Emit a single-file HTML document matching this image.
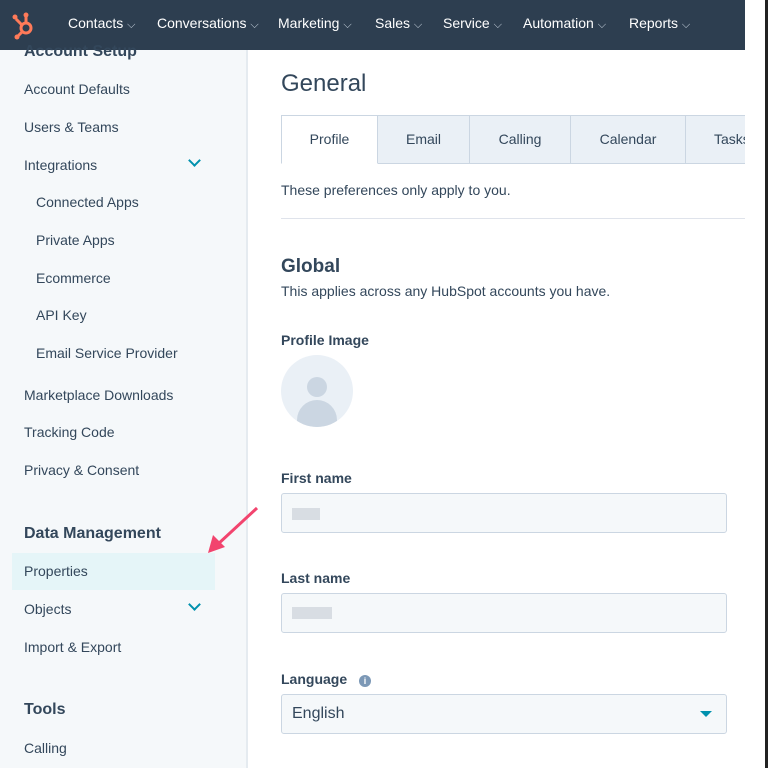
<!DOCTYPE html><html><head><style>
*{margin:0;padding:0;box-sizing:border-box}
body{width:768px;height:782px;background:#fff;font-family:"Liberation Sans",sans-serif;position:relative;overflow:hidden;color:#33475b}
.nav{position:absolute;left:0;top:0;width:745px;height:50px;background:#2d3e50}
.nav span{position:absolute;top:15px;color:#fff;font-size:14px}
.nav i{font-style:normal;font-size:11px;color:#cbd6e2}
.side{position:absolute;left:0;top:50px;width:248px;height:718px;background:#f5f8fa;border-right:2px solid #e5ebf0}
.side div{position:absolute;font-size:14px;color:#33475b}
.side .h{font-size:16px;font-weight:bold}
.abs{position:absolute}
.clip{position:absolute;left:0;top:0;width:745px;height:782px;overflow:hidden}
.tab{position:absolute;top:115px;height:49px;border:1px solid #cbd6e2;background:#eaf0f6;font-size:14px;text-align:center;line-height:47px}
.lbl{position:absolute;left:281px;font-size:14px;font-weight:bold;color:#33475b}
.inp{position:absolute;left:281px;width:446px;height:40px;background:#f5f8fa;border:1px solid #cbd6e2;border-radius:3px}
.chev{position:absolute;width:9px;height:9px;border-right:2px solid #0091ae;border-bottom:2px solid #0091ae;transform:rotate(45deg)}
</style></head><body>
<div class="nav">
<svg class="abs" style="left:12px;top:10px" width="24" height="30" viewBox="0 0 24 30"><g stroke="#ff7a59" stroke-width="3" fill="none"><circle cx="14" cy="18" r="5"/><line x1="14" y1="13" x2="14" y2="6"/><line x1="10" y1="15" x2="4" y2="9"/><line x1="10" y1="22" x2="6" y2="26"/></g><circle cx="14" cy="5" r="2.5" fill="#ff7a59"/><circle cx="3" cy="7" r="2.5" fill="#ff7a59"/><circle cx="5" cy="27" r="2.5" fill="#ff7a59"/></svg>
<span style="left:68px">Contacts <i>⌵</i></span><span style="left:157px">Conversations <i>⌵</i></span><span style="left:278px">Marketing <i>⌵</i></span><span style="left:375px">Sales <i>⌵</i></span><span style="left:443px">Service <i>⌵</i></span><span style="left:523px">Automation <i>⌵</i></span><span style="left:629px">Reports <i>⌵</i></span>
</div>
<div class="side">
<div class="h" style="left:24px;top:-7px">Account Setup</div>
<div style="left:24px;top:31px">Account Defaults</div>
<div style="left:24px;top:69px">Users &amp; Teams</div>
<div style="left:24px;top:107px">Integrations</div>
<div class="chev" style="left:190px;top:106px"></div>
<div style="left:36px;top:144px">Connected Apps</div>
<div style="left:36px;top:182px">Private Apps</div>
<div style="left:36px;top:220px">Ecommerce</div>
<div style="left:36px;top:257px">API Key</div>
<div style="left:36px;top:295px">Email Service Provider</div>
<div style="left:24px;top:337px">Marketplace Downloads</div>
<div style="left:24px;top:374px">Tracking Code</div>
<div style="left:24px;top:412px">Privacy &amp; Consent</div>
<div class="h" style="left:24px;top:475px">Data Management</div>
<div style="left:12px;top:503px;width:203px;height:37px;background:#e5f5f8"></div>
<div style="left:24px;top:513px">Properties</div>
<div style="left:24px;top:551px">Objects</div>
<div class="chev" style="left:190px;top:550px"></div>
<div style="left:24px;top:589px">Import &amp; Export</div>
<div class="h" style="left:24px;top:651px">Tools</div>
<div style="left:24px;top:690px">Calling</div>
</div>
<div class="clip">
<div class="abs" style="left:281px;top:70px;font-size:24px;color:#33475b">General</div>
<div class="tab" style="left:377px;width:93px">Email</div>
<div class="tab" style="left:469px;width:102px">Calling</div>
<div class="tab" style="left:570px;width:116px">Calendar</div>
<div class="tab" style="left:685px;width:80px;text-align:left;padding-left:28px">Tasks</div>
<div class="tab" style="left:281px;width:97px;background:#fff;border-bottom-color:#fff">Profile</div>
</div>
<div class="abs" style="left:281px;top:182px;font-size:14px">These preferences only apply to you.</div>
<div class="abs" style="left:281px;top:218px;width:464px;height:1px;background:#dfe3eb"></div>
<div class="abs" style="left:281px;top:256px;font-size:19px;font-weight:bold">Global</div>
<div class="abs" style="left:281px;top:283px;font-size:14px">This applies across any HubSpot accounts you have.</div>
<div class="lbl" style="top:332px">Profile Image</div>
<div class="abs" style="left:281px;top:355px;width:72px;height:72px;border-radius:50%;background:#eaf0f6;overflow:hidden">
<div class="abs" style="left:26px;top:22px;width:20px;height:20px;border-radius:50%;background:#cbd6e2"></div>
<div class="abs" style="left:16px;top:45px;width:40px;height:30px;border-radius:20px 20px 0 0;background:#cbd6e2"></div></div>
<div class="lbl" style="top:470px">First name</div>
<div class="inp" style="top:493px"><div class="abs" style="left:10px;top:14px;width:28px;height:12px;background:#d8dde3"></div></div>
<div class="lbl" style="top:570px">Last name</div>
<div class="inp" style="top:593px"><div class="abs" style="left:10px;top:13px;width:40px;height:12px;background:#d8dde3"></div></div>
<div class="lbl" style="top:671px">Language <span style="display:inline-block;width:12px;height:12px;border-radius:50%;background:#7c98b6;margin-left:8px;vertical-align:0;color:#fff;font-size:9px;text-align:center;line-height:12px">i</span></div>
<div class="inp" style="top:694px"><div class="abs" style="left:10px;top:10px;font-size:16px">English</div><div class="abs" style="left:418px;top:16px;border-left:6px solid transparent;border-right:6px solid transparent;border-top:6px solid #0091ae"></div></div>
<div class="abs" style="left:765px;top:0;width:3px;height:768px;background:#222"></div>
<svg class="abs" style="left:205px;top:505px" width="55" height="50"><line x1="52" y1="3" x2="12" y2="40" stroke="#f2446e" stroke-width="3"/><polygon points="3,48 8,30 20,42" fill="#f2446e"/></svg>
</body></html>
